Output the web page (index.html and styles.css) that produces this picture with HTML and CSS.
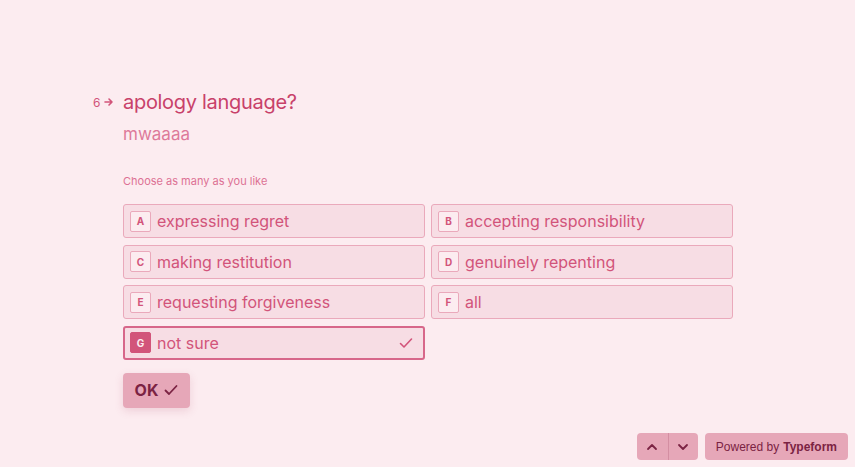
FILE: index.html
```html
<!DOCTYPE html>
<html>
<head>
<meta charset="utf-8">
<link rel="stylesheet" href="styles.css">
</head>
<body>
<main class="page">
  <section class="question">
    <div class="counter"><span class="num">6</span><svg class="arrow" width="10" height="10" viewBox="0 0 10 10"><path d="M1 5h7M5 2l3 3-3 3" fill="none" stroke="currentColor" stroke-width="1.6" stroke-linecap="round" stroke-linejoin="round"/></svg></div>
    <div class="content">
      <h1 class="title">apology language?</h1>
      <p class="desc">mwaaaa</p>
      <p class="hint">Choose as many as you like</p>
      <div class="options">
        <div class="option"><span class="key">A</span><span class="label">expressing regret</span></div>
        <div class="option"><span class="key">B</span><span class="label">accepting responsibility</span></div>
        <div class="option"><span class="key">C</span><span class="label">making restitution</span></div>
        <div class="option"><span class="key">D</span><span class="label">genuinely repenting</span></div>
        <div class="option"><span class="key">E</span><span class="label">requesting forgiveness</span></div>
        <div class="option"><span class="key">F</span><span class="label">all</span></div>
        <div class="option selected"><span class="key">G</span><span class="label">not sure</span><svg class="check" width="14" height="14" viewBox="0 0 14 14"><path d="M1.5 7.5l3.5 3.5 7.5-8" fill="none" stroke="currentColor" stroke-width="1.6" stroke-linecap="round" stroke-linejoin="round"/></svg></div>
      </div>
      <button class="ok">OK <svg width="14" height="14" viewBox="0 0 14 14"><path d="M1.5 7.5l3.5 3.5 7.5-8" fill="none" stroke="currentColor" stroke-width="1.8" stroke-linecap="round" stroke-linejoin="round"/></svg></button>
    </div>
  </section>
  <footer class="footer">
    <div class="nav">
      <button class="navbtn"><svg width="14" height="14" viewBox="0 0 14 14"><path d="M3 9l4-4 4 4" fill="none" stroke="currentColor" stroke-width="1.8" stroke-linecap="round" stroke-linejoin="round"/></svg></button>
      <button class="navbtn"><svg width="14" height="14" viewBox="0 0 14 14"><path d="M3 5l4 4 4-4" fill="none" stroke="currentColor" stroke-width="1.8" stroke-linecap="round" stroke-linejoin="round"/></svg></button>
    </div>
    <div class="powered">Powered by <b>Typeform</b></div>
  </footer>
</main>
</body>
</html>
```
FILE: styles.css
```css
* { box-sizing: border-box; }
html, body { margin: 0; padding: 0; }
body {
  background: #fcecf0;
  font-family: Inter, "Noto Sans", sans-serif;
  width: 855px;
  height: 467px;
  overflow: hidden;
}
.page {
  height: 467px;
  display: flex;
  flex-direction: column;
}
.question {
  display: flex;
  padding-top: 89px;
  padding-left: 88px;
}
.counter {
  width: 35px;
  display: flex;
  align-items: center;
  gap: 4px;
  height: 26px;
  color: #d2547a;
  font-size: 12px;
  padding-left: 5px;
}
.arrow { display: block; }
.content { width: 610px; }
.title {
  margin: 0;
  font-size: 20px;
  line-height: 26px;
  font-weight: 400;
  color: #c8416a;
  letter-spacing: -0.3px;
}
.desc {
  margin: 7px 0 0;
  font-size: 17px;
  line-height: 24px;
  color: #de7a9a;
}
.hint {
  margin: 27px 0 0;
  font-size: 11px;
  line-height: 16px;
  color: #dc7194;
}
.options {
  margin-top: 15px;
  display: grid;
  grid-template-columns: 302px 302px;
  column-gap: 6px;
  row-gap: 6.67px;
}
.option {
  height: 34px;
  display: flex;
  align-items: center;
  padding: 0 6px;
  background: #f7dde4;
  border: 1px solid #eaa9bb;
  border-radius: 3px;
  color: #d2547a;
}
.key {
  width: 21px;
  height: 21px;
  display: flex;
  align-items: center;
  justify-content: center;
  border: 1px solid #eaa9bb;
  border-radius: 2px;
  background: #fcecf0;
  font-size: 10px;
  font-weight: 700;
  margin-right: 6px;
}
.label {
  font-size: 16px;
  flex: 1;
}
.option.selected {
  border: 2px solid #d7678a;
  padding: 0 5px;
}
.option.selected .key {
  background: #d2547a;
  border-color: #d2547a;
  color: #fcecf0;
}
.check { color: #d2547a; margin-right: 5px; }
.ok {
  margin-top: 13px;
  width: 67px;
  height: 35px;
  border: none;
  border-radius: 4px;
  background: #e6a7b8;
  color: #7b2343;
  font-family: inherit;
  font-size: 16px;
  font-weight: 700;
  display: flex;
  align-items: center;
  justify-content: center;
  gap: 6px;
  box-shadow: 0 3px 8px rgba(180, 80, 110, 0.18);
  padding: 0;
}
.ok svg { display: block; }
.footer {
  margin-top: auto;
  display: flex;
  justify-content: flex-end;
  gap: 7px;
  padding: 0 7px 7px 0;
}
.nav {
  display: flex;
  border-radius: 4px;
  overflow: hidden;
}
.navbtn {
  width: 31px;
  height: 27px;
  border: none;
  background: #e6a7b8;
  color: #7b2343;
  display: flex;
  align-items: center;
  justify-content: center;
  padding: 0;
}
.navbtn + .navbtn { border-left: 1px solid #d48ea2; width: 30px; }
.powered {
  height: 27px;
  padding: 0 11px;
  display: flex;
  align-items: center;
  background: #e6a7b8;
  color: #7b2343;
  border-radius: 4px;
  font-size: 12px;
  font-family: "Liberation Sans", Arial, sans-serif;
  gap: 4px;
}
.powered b { font-weight: 700; }
```
